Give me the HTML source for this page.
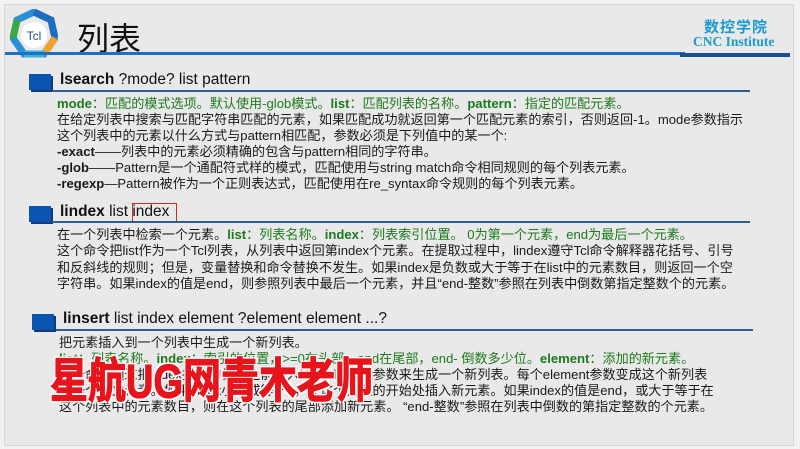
<!DOCTYPE html>
<html><head><meta charset="utf-8"><style>
body{margin:0;width:800px;height:449px;overflow:hidden;background:#f2f2f2;font-family:"Liberation Sans","Noto Sans CJK SC",sans-serif;}
.frame{position:absolute;left:4px;top:4px;width:788px;height:440px;background:#e9e9e9;border:1px solid #d6d6d6;}
.abs{position:absolute;white-space:nowrap;}
.t{font-size:13.1px;color:#1a1a1a;line-height:16.5px;left:57px;}
.g{color:#1d7a1d}
.gb{color:#1d7a1d;font-weight:bold}
.h{font-size:15.5px;color:#111;left:60px;}
.sq{position:absolute;width:22px;height:16px;background:#0b55b0;box-shadow:2px 2px 0 #123a78;}
.ul{position:absolute;height:2px;background:#2d5f95;}
</style></head><body>
<div class="frame"></div>
<svg class="abs" style="left:10px;top:9px" width="48" height="50" viewBox="0 0 48 50">
<polygon points="24,3 41,11 45,29 34,45 14,45 3,29 7,11" fill="none" stroke="#2a8fd6" stroke-width="7"/>
<path d="M24,3 L41,11 L45,29" fill="none" stroke="#1e6ec0" stroke-width="7"/>
<path d="M45,29 L34,45" fill="none" stroke="#f0a030" stroke-width="7"/>
<path d="M3,29 L7,11" fill="none" stroke="#3aa845" stroke-width="7"/>
<path d="M14,45 L34,45" fill="none" stroke="#35b4e0" stroke-width="7"/>
<circle cx="24" cy="26" r="13" fill="#fff"/>
<text x="24" y="31" font-size="12" text-anchor="middle" fill="#1b4f8a" font-family="Liberation Sans">Tcl</text>
</svg>
<div class="abs" style="left:77px;top:14px;font-size:32px;color:#111;">列表</div>
<div class="abs" style="left:704px;top:16px;font-size:15px;color:#1a9ad0;font-weight:bold;letter-spacing:1px">数控学院</div>
<div class="abs" style="left:693px;top:34px;font-size:13.5px;color:#1a9ad0;font-weight:bold;font-family:'Liberation Serif',serif">CNC Institute</div>
<div class="abs" style="left:5px;top:52px;width:680px;height:3px;background:#1f6ec2"></div>
<div class="abs" style="left:680px;top:53px;width:110px;height:4px;background:#1a4f90"></div>

<div class="sq" style="left:29px;top:74px"></div>
<div class="abs h" style="top:71px"><b>lsearch</b> ?mode? list pattern</div>
<div class="ul" style="left:52px;top:90px;width:698px"></div>
<div class="abs t" style="top:96px"><span class="gb">mode</span><span class="g">：匹配的模式选项。默认使用-glob模式。</span><span class="gb">list</span><span class="g">：匹配列表的名称。</span><span class="gb">pattern</span><span class="g">：指定的匹配元素。</span></div>
<div class="abs t" style="top:112px">在给定列表中搜索与匹配字符串匹配的元素，如果匹配成功就返回第一个匹配元素的索引，否则返回-1。mode参数指示</div>
<div class="abs t" style="top:128px">这个列表中的元素以什么方式与pattern相匹配，参数必须是下列值中的某一个:</div>
<div class="abs t" style="top:144px"><b>-exact</b>——列表中的元素必须精确的包含与pattern相同的字符串。</div>
<div class="abs t" style="top:160px"><b>-glob</b>——Pattern是一个通配符式样的模式，匹配使用与string match命令相同规则的每个列表元素。</div>
<div class="abs t" style="top:176px"><b>-regexp</b>—Pattern被作为一个正则表达式，匹配使用在re_syntax命令规则的每个列表元素。</div>

<div class="sq" style="left:29px;top:206px"></div>
<div class="abs h" style="top:203px"><b>lindex</b> list index</div>
<div class="abs" style="left:132px;top:203px;width:43px;height:17px;border:1.5px solid #d22;"></div>
<div class="ul" style="left:52px;top:221px;width:698px;height:1.5px"></div>
<div class="abs t" style="top:227px">在一个列表中检索一个元素。<span class="gb">list</span><span class="g">：列表名称。</span><span class="gb">index</span><span class="g">：列表索引位置。 0为第一个元素，end为最后一个元素。</span></div>
<div class="abs t" style="top:243px">这个命令把list作为一个Tcl列表，从列表中返回第index个元素。在提取过程中，lindex遵守Tcl命令解释器花括号、引号</div>
<div class="abs t" style="top:260px">和反斜线的规则；但是，变量替换和命令替换不发生。如果index是负数或大于等于在list中的元素数目，则返回一个空</div>
<div class="abs t" style="top:276px">字符串。如果index的值是end，则参照列表中最后一个元素，并且“end-整数”参照在列表中倒数第指定整数个的元素。</div>

<div class="sq" style="left:32px;top:314px"></div>
<div class="abs h" style="top:310px;left:63px"><b>linsert</b> list index element ?element element ...?</div>
<div class="ul" style="left:56px;top:329px;width:697px;height:1.5px"></div>
<div class="abs t" style="top:335px;left:59px">把元素插入到一个列表中生成一个新列表。</div>
<div class="abs t" style="top:351px;left:59px"><span class="gb">list</span><span class="g">：列表名称。</span><span class="gb">index</span><span class="g">：索引的位置，>=0在头部，end在尾部，end- 倒数多少位。</span><span class="gb">element</span><span class="g">：添加的新元素。</span></div>
<div class="abs t" style="top:367px;left:59px">这个命令通过把index指定的位置之前插入所有element参数来生成一个新列表。每个element参数变成这个新列表</div>
<div class="abs t" style="top:383px;left:59px">的一个独立元素。如果index小于或等于0，在这个列表的开始处插入新元素。如果index的值是end，或大于等于在</div>
<div class="abs t" style="top:399px;left:59px">这个列表中的元素数目，则在这个列表的尾部添加新元素。 “end-整数”参照在列表中倒数的第指定整数的个元素。</div>

<div class="abs" style="left:50px;top:355px;font-size:38px;line-height:44px;font-weight:bold;color:#e8141c;-webkit-text-stroke:1px #e8141c;transform:scaleY(1.25);transform-origin:0 0;text-shadow:1.5px 1.5px 0 #fff,-1.5px -1.5px 0 #fff,1.5px -1.5px 0 #fff,-1.5px 1.5px 0 #fff">星航UG网青木老师</div>
</body></html>
